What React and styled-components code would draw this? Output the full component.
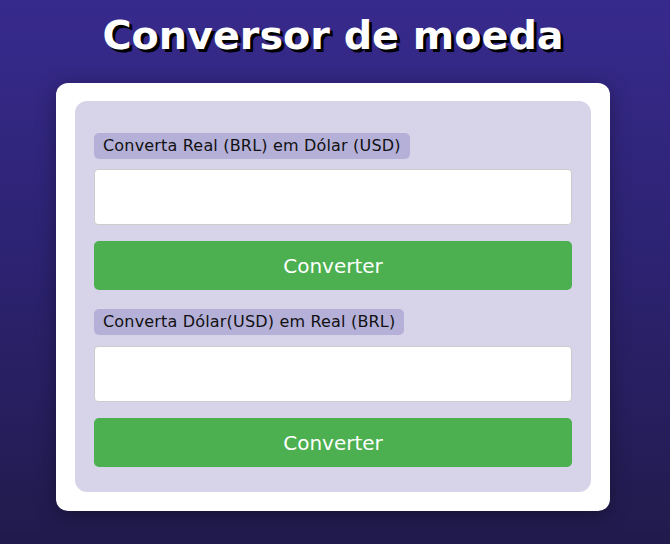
import React from "react";
import styled, { createGlobalStyle } from "styled-components";

const Global = createGlobalStyle`
  html, body { margin: 0; padding: 0; }
  body {
    min-height: 544px;
    background: linear-gradient(to bottom, #372a8d 0%, #2c2270 50%, #211b4c 100%);
    font-family: "DejaVu Sans", Verdana, sans-serif;
  }
`;

const Page = styled.div`
  display: flex;
  flex-direction: column;
  align-items: center;
  padding-top: 8px;
  padding-right: 4px;
`;

const Title = styled.h1`
  margin: 0 0 21px 0;
  font-family: "DejaVu Sans", Verdana, sans-serif;
  font-weight: bold;
  font-size: 39.7px;
  line-height: 54px;
  color: #fff;
  text-shadow: 3px 3px 0 #000;
`;

const Card = styled.div`
  width: 554px;
  box-sizing: border-box;
  background: #fff;
  border-radius: 12px;
  padding: 18px 19px 19px;
  box-shadow: 0 4px 20px rgba(0, 0, 0, 0.35);
`;

const Inner = styled.div`
  background: #d7d4ea;
  border-radius: 12px;
  padding: 32px 19px 25px;
  display: flex;
  flex-direction: column;
`;

const Section = styled.div`
  display: flex;
  flex-direction: column;
  align-items: flex-start;
  margin-top: ${(p) => (p.$first ? "0" : "19px")};
`;

const Label = styled.label`
  background: #b5b0d8;
  color: #111;
  font-size: 16px;
  letter-spacing: 0.18px;
  line-height: 26px;
  padding: 0 9px;
  border-radius: 5px;
  margin-bottom: ${(p) => (p.$first ? "10px" : "11px")};
`;

const Input = styled.input`
  width: 100%;
  height: 56px;
  box-sizing: border-box;
  border: 1px solid #cccccc;
  border-radius: 4px;
  background: #fff;
  font-size: 16px;
  padding: 0 10px;
  margin-bottom: 16px;
`;

const Button = styled.button`
  width: 100%;
  height: 49px;
  border: none;
  border-radius: 5px;
  background: #4caf50;
  color: #fff;
  font-family: "DejaVu Sans", Verdana, sans-serif;
  font-size: 20px;
  cursor: pointer;
`;

export default function App() {
  return (
    <>
      <Global />
      <Page>
        <Title>Conversor de moeda</Title>
        <Card>
          <Inner>
            <Section $first>
              <Label $first>Converta Real (BRL) em Dólar (USD)</Label>
              <Input type="text" />
              <Button>Converter</Button>
            </Section>
            <Section>
              <Label>Converta Dólar(USD) em Real (BRL)</Label>
              <Input type="text" />
              <Button>Converter</Button>
            </Section>
          </Inner>
        </Card>
      </Page>
    </>
  );
}
